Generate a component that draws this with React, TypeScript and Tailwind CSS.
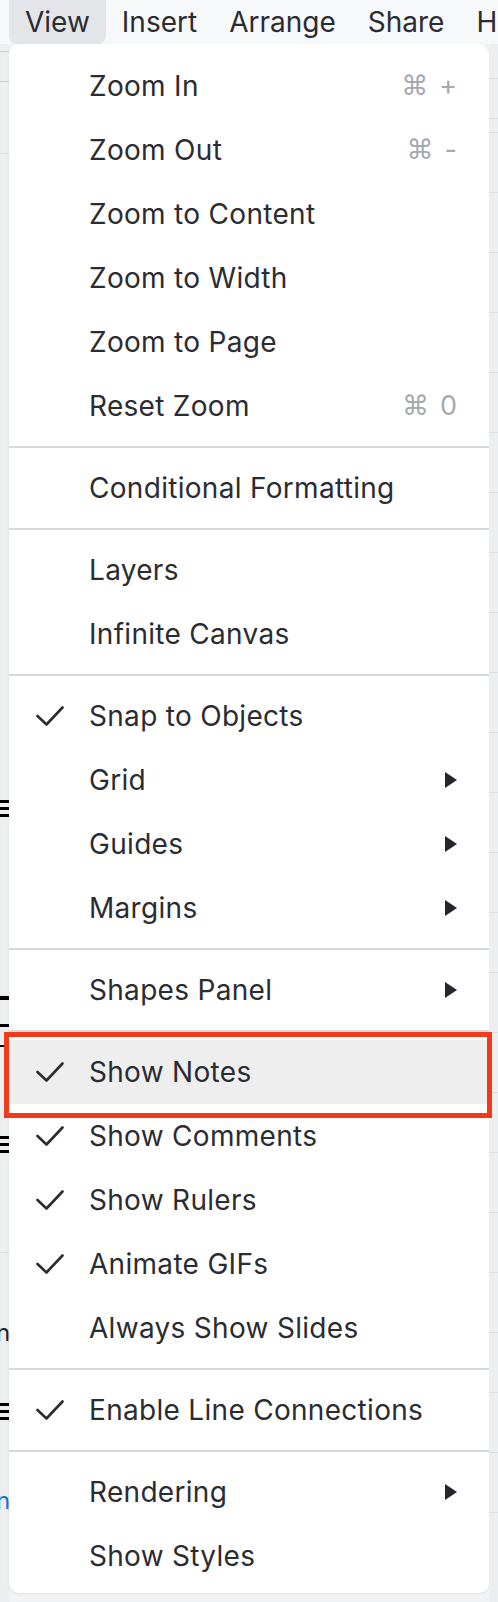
import React from "react"

type Item = {
  label: string
  check?: boolean
  keys?: [string, string]
  sub?: boolean
  active?: boolean
}

const GROUPS: Item[][] = [
  [
    { label: "Zoom In", keys: ["⌘", "+"] },
    { label: "Zoom Out", keys: ["⌘", "-"] },
    { label: "Zoom to Content" },
    { label: "Zoom to Width" },
    { label: "Zoom to Page" },
    { label: "Reset Zoom", keys: ["⌘", "0"] },
  ],
  [{ label: "Conditional Formatting" }],
  [{ label: "Layers" }, { label: "Infinite Canvas" }],
  [
    { label: "Snap to Objects", check: true },
    { label: "Grid", sub: true },
    { label: "Guides", sub: true },
    { label: "Margins", sub: true },
  ],
  [{ label: "Shapes Panel", sub: true }],
  [
    { label: "Show Notes", check: true, active: true },
    { label: "Show Comments", check: true },
    { label: "Show Rulers", check: true },
    { label: "Animate GIFs", check: true },
    { label: "Always Show Slides" },
  ],
  [{ label: "Enable Line Connections", check: true }],
  [{ label: "Rendering", sub: true }, { label: "Show Styles" }],
]

const TOP_MENUS = ["View", "Insert", "Arrange", "Share", "Help"]

function Check() {
  return (
    <svg width="28" height="22" viewBox="0 0 28 22" fill="none">
      <polyline points="1.5,11 10.5,19.5 26.5,2.5" stroke="#2b2c31" strokeWidth="2.6" strokeLinecap="round" strokeLinejoin="round" />
    </svg>
  )
}

function Caret() {
  return (
    <svg width="12" height="16" viewBox="0 0 12 16">
      <polygon points="0,0 12,8 0,16" fill="#26272c" />
    </svg>
  )
}

function Lines3() {
  return (
    <div className="flex flex-col gap-[4px]">
      <div className="h-[3px] bg-black" />
      <div className="h-[3px] bg-black" />
      <div className="h-[3px] bg-black" />
    </div>
  )
}

function Row({ item }: { item: Item }) {
  return (
    <div className={`h-[64px] flex items-center pl-[27px] pr-[32px] ${item.active ? "bg-[#eeeeef]" : ""}`}>
      <div className="w-[53px] flex items-center">{item.check && <Check />}</div>
      <span className="flex-1 text-[28px] text-[#2b2c31] tracking-[0.3px] whitespace-nowrap">{item.label}</span>
      {item.keys && (
        <span className="flex items-center gap-[11px] text-[27px] text-[#a6a9af]">
          <span className="font-['DejaVu_Sans',sans-serif] text-[27px]">{item.keys[0]}</span>
          <span>{item.keys[1]}</span>
        </span>
      )}
      {item.sub && <Caret />}
    </div>
  )
}

function RightStrip() {
  // bits of the canvas peeking out beside the menu
  const lines = [35, 40, 14, 60, 60, 60, 60, 60, 60, 60, 60, 60, 60, 60, 60, 60, 60, 60, 60, 60, 60, 60, 60, 60, 60, 60]
  return (
    <div className="w-[9px] flex flex-col bg-[#eceef0]">
      {lines.map((h, i) => (
        <div key={i} style={{ height: h }} className="border-b border-[#dcdee2] shrink-0" />
      ))}
    </div>
  )
}

export default function App() {
  return (
    <div className="relative w-[498px] h-[1602px] overflow-hidden bg-[#f1f2f4] font-['Inter',sans-serif]">
      {/* top menu bar */}
      <div className="h-[44px] flex items-stretch pl-[9px] bg-[#f7f8f9] whitespace-nowrap">
        {TOP_MENUS.map((m) => (
          <div
            key={m}
            className={`px-[16px] flex items-center text-[28px] text-[#2b2c31] rounded-b-[8px] ${m === "View" ? "bg-[#e3e5e8]" : ""}`}
          >
            {m}
          </div>
        ))}
      </div>

      <div className="flex h-[1558px]">
        {/* canvas edge on the left */}
        <div className="w-[9px] flex flex-col bg-[#eceef0] shrink-0">
          <div className="h-[8px] border-b border-[#c9ccd1] shrink-0" />
          <div className="h-[30px] border-b border-[#c9ccd1] shrink-0" />
          <div className="h-[72px] border-b border-[#dcdee2] shrink-0" />
          <div className="h-[646px] shrink-0" />
          <Lines3 />
          <div className="h-[179px] border-b border-[#dcdee2] shrink-0" />
          <div className="h-[4px] bg-black shrink-0" />
          <div className="h-[24px] shrink-0" />
          <div className="h-[3px] bg-black shrink-0" />
          <div className="h-[20px] border-b-2 border-black shrink-0" />
          <div className="h-[89px] shrink-0" />
          <Lines3 />
          <div className="h-[100px] border-b border-[#dcdee2] shrink-0" />
          <div className="h-[60px] shrink-0" />
          <div className="h-[40px] text-[24px] leading-[40px] text-[#222] -ml-[4px] shrink-0">n</div>
          <div className="h-[50px] shrink-0" />
          <Lines3 />
          <div className="h-[61px] shrink-0" />
          <div className="h-[40px] text-[24px] leading-[40px] text-[#1f6fd1] -ml-[4px] shrink-0">n</div>
        </div>

        <div className="w-[480px] h-[1549px] bg-white rounded-[10px] shadow-[0_1px_3px_rgba(0,0,0,0.08)] pt-[10px] pb-[6px]">
          {GROUPS.map((g, gi) => (
            <div key={gi}>
              {gi > 0 && <div className="my-[8px] h-[2px] bg-[#d6d9dd]" />}
              {g.map((it) => (
                <Row key={it.label} item={it} />
              ))}
            </div>
          ))}
        </div>

        <RightStrip />
      </div>

      {/* highlight annotation */}
      <div className="absolute left-[4px] top-[1032px] w-[488px] h-[86px] border-[5px] border-[#f03a1b]" />
    </div>
  )
}
